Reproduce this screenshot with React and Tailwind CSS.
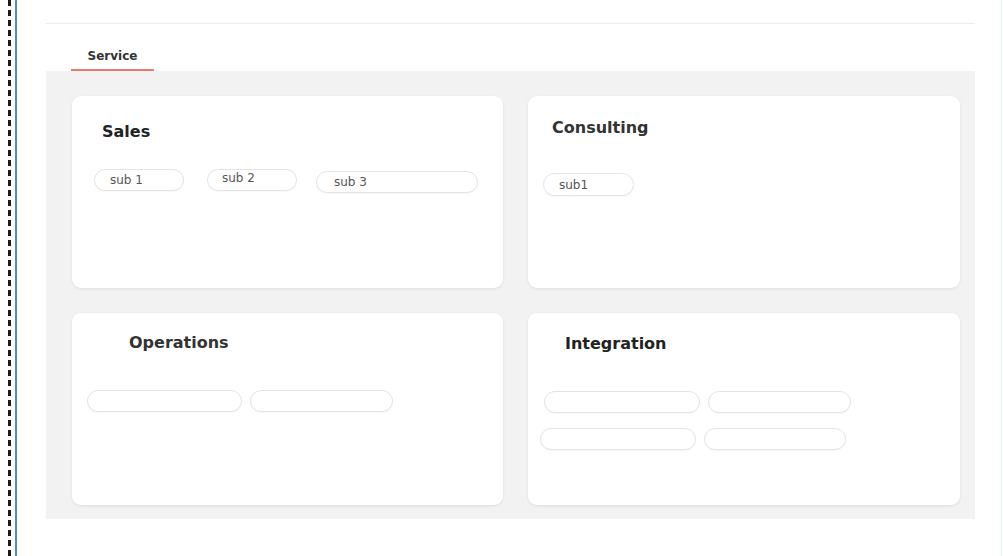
import React from "react";

const font = { fontFamily: '"DejaVu Sans", "Liberation Sans", sans-serif' };

function Chip({ w, label, pl = "pl-[15px]", extra = "" }) {
  return (
    <div
      className={`h-[22px] rounded-full border border-[#e4e4e4] bg-white flex items-center ${pl} text-[12px] text-[#555] shadow-[0_1px_1px_rgba(0,0,0,0.03)] ${extra}`}
      style={{ width: w }}
    >
      {label}
    </div>
  );
}

function Card({ children, className = "" }) {
  return (
    <div className={`bg-white rounded-[9px] shadow-[0_1px_3px_rgba(0,0,0,0.09)] flex flex-col ${className}`}>
      {children}
    </div>
  );
}

export default function App() {
  return (
    <div className="w-[1003px] h-[556px] bg-white flex relative overflow-hidden" style={font}>
      <div className="ml-[8px] w-[3px] h-full bg-[repeating-linear-gradient(to_bottom,#1a1a1a_0px,#1a1a1a_6px,transparent_6px,transparent_10px)]" />
      <div className="ml-[4px] w-[2px] h-full bg-[#4a93a8]" />
      <div className="ml-[29px] w-[929px] flex flex-col">
        <div className="mt-[23px] h-[1px] bg-[#ececec]" />
        <div className="h-[47px] bg-white flex items-end pl-[25px]">
          <div className="w-[83px] flex flex-col items-center">
            <span className="text-[12px] font-bold text-[#333] leading-[16px] mb-[5px]">Service</span>
            <div className="w-full h-[2px] bg-[#e77a6e]" />
          </div>
        </div>
        <div className="h-[448px] bg-[#f2f2f2] grid grid-cols-[431px_432px] grid-rows-[192px_192px] gap-[25px] pl-[26px] pr-[15px] pt-[25px] pb-[14px]">
          <Card className="pt-[26px]">
            <div className="pl-[30px] text-[16px] leading-[20px] font-bold text-[#222]">Sales</div>
            <div className="mt-[27px] pl-[22px] flex items-start">
              <Chip w={90} label="sub 1" />
              <Chip w={90} label={<span className="-mt-[4px]">sub 2</span>} pl="pl-[14px]" extra="ml-[23px]" />
              <Chip w={162} label="sub 3" pl="pl-[17px]" extra="ml-[19px] mt-[2px]" />
            </div>
          </Card>
          <Card className="pt-[22px]">
            <div className="pl-[24px] text-[16px] leading-[20px] font-bold text-[#333]">Consulting</div>
            <div className="mt-[35px] pl-[15px] flex">
              <Chip w={91} label="sub1" extra="h-[23px]" />
            </div>
          </Card>
          <Card className="pt-[20px]">
            <div className="pl-[57px] text-[16px] leading-[20px] font-bold text-[#333]">Operations</div>
            <div className="mt-[37px] pl-[15px] flex gap-[8px]">
              <Chip w={155} label="" />
              <Chip w={143} label="" />
            </div>
          </Card>
          <Card className="pt-[21px]">
            <div className="pl-[37px] text-[16px] leading-[20px] font-bold text-[#222]">Integration</div>
            <div className="mt-[37px] pl-[16px] flex gap-[8px]">
              <Chip w={156} label="" />
              <Chip w={143} label="" />
            </div>
            <div className="mt-[15px] pl-[12px] flex gap-[8px]">
              <Chip w={156} label="" />
              <Chip w={142} label="" />
            </div>
          </Card>
        </div>
      </div>
      <div className="absolute right-[1px] top-0 w-[1px] h-full bg-[#e3f6f6]" />
    </div>
  );
}
